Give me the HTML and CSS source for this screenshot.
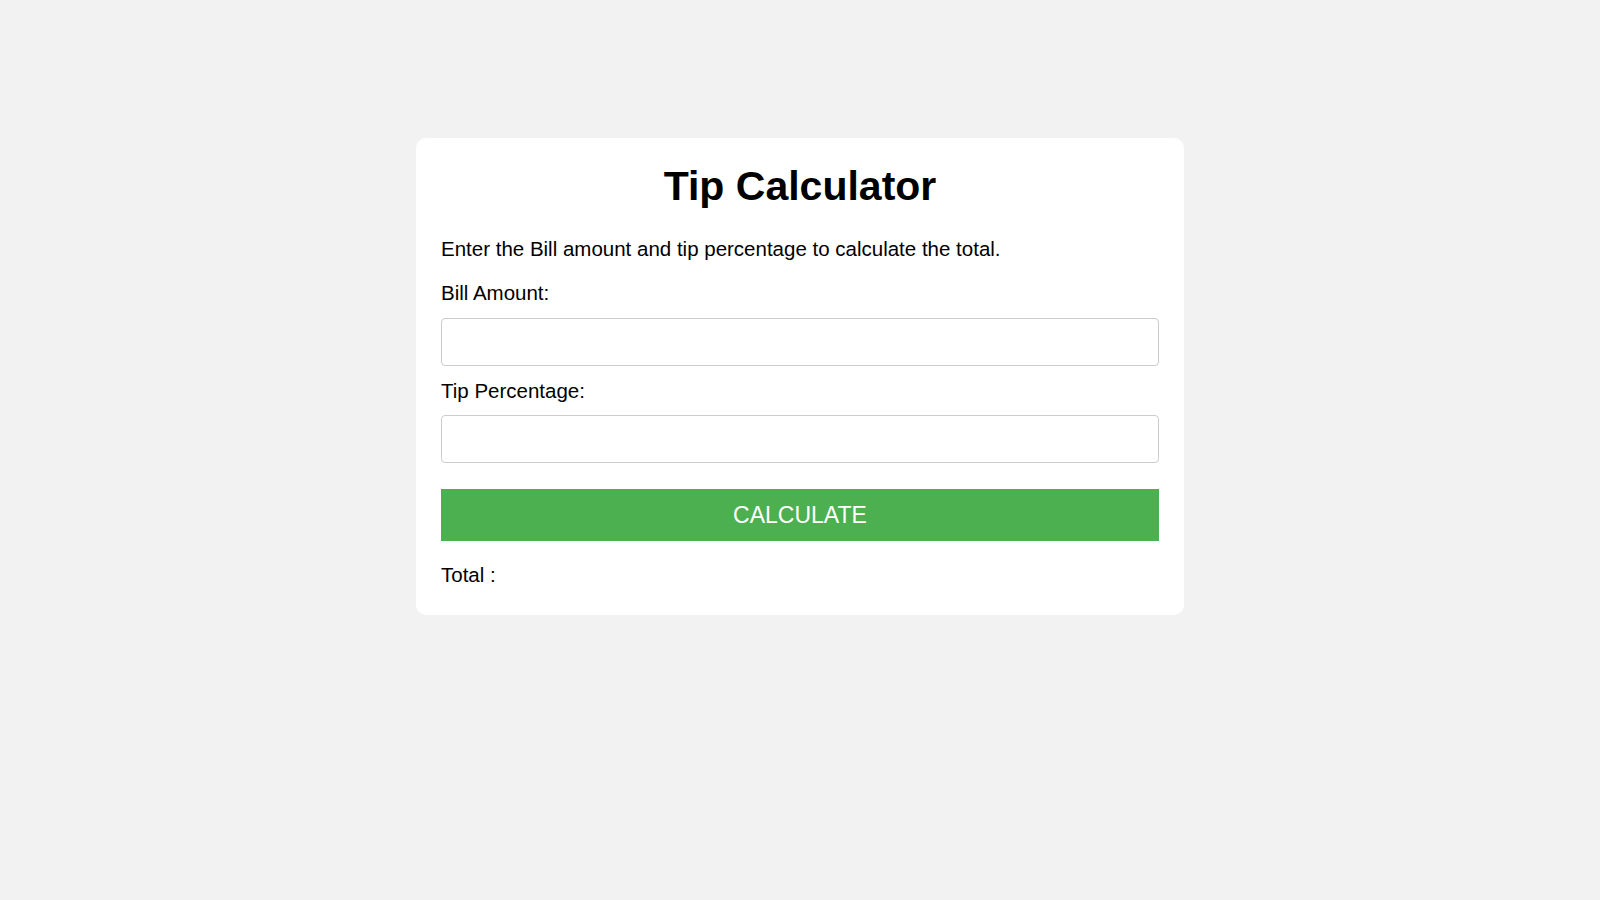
FILE: index.html
```html
<!DOCTYPE html>
<html lang="en">
<head>
<meta charset="utf-8">
<title>Tip Calculator</title>
<link rel="stylesheet" href="styles.css">
</head>
<body>
<main class="card">
  <h1 class="title">Tip Calculator</h1>
  <p class="intro">Enter the Bill amount and tip percentage to calculate the total.</p>
  <label class="field-label" for="bill">Bill Amount:</label>
  <input class="field-input field-input-first" id="bill" type="number">
  <label class="field-label" for="tip">Tip Percentage:</label>
  <input class="field-input" id="tip" type="number">
  <button class="calc-btn" type="button">CALCULATE</button>
  <p class="total">Total : <span class="total-value"></span></p>
</main>
</body>
</html>
```

FILE: styles.css
```css
html, body {
  margin: 0;
  padding: 0;
}

body {
  background: #f2f2f2;
  font-family: "Liberation Sans", Arial, sans-serif;
  color: #000;
  font-size: 20px;
  line-height: normal;
}

.card {
  box-sizing: border-box;
  width: 768px;
  margin: 138px auto 0;
  padding: 25px 25px 29px;
  background: #fff;
  border-radius: 10px;
  display: flex;
  flex-direction: column;
}

.title {
  margin: 0;
  font-size: 41px;
  font-weight: bold;
  text-align: center;
  line-height: 46px;
}

.intro {
  margin: 28px 0 0;
  font-size: 20.5px;
  line-height: 23px;
}

.field-label {
  display: block;
  margin-top: 21px;
  font-size: 20.5px;
  line-height: 23px;
}

.field-input + .field-label {
  margin-top: 13px;
}

.field-input {
  box-sizing: border-box;
  display: block;
  width: 100%;
  height: 48px;
  margin: 13px 0 0;
  padding: 10px;
  border: 1px solid #ccc;
  border-radius: 4px;
  background: #fff;
  font-family: inherit;
  font-size: 20px;
}

.field-input-first {
  margin-top: 14px;
}

.calc-btn {
  display: block;
  width: 100%;
  height: 52px;
  margin-top: 26px;
  border: none;
  border-radius: 0;
  background: #4caf50;
  color: #fff;
  font-family: inherit;
  font-size: 23px;
  cursor: pointer;
}

.total {
  margin: 22px 0 0;
  font-size: 20.5px;
  line-height: 23px;
}
```
